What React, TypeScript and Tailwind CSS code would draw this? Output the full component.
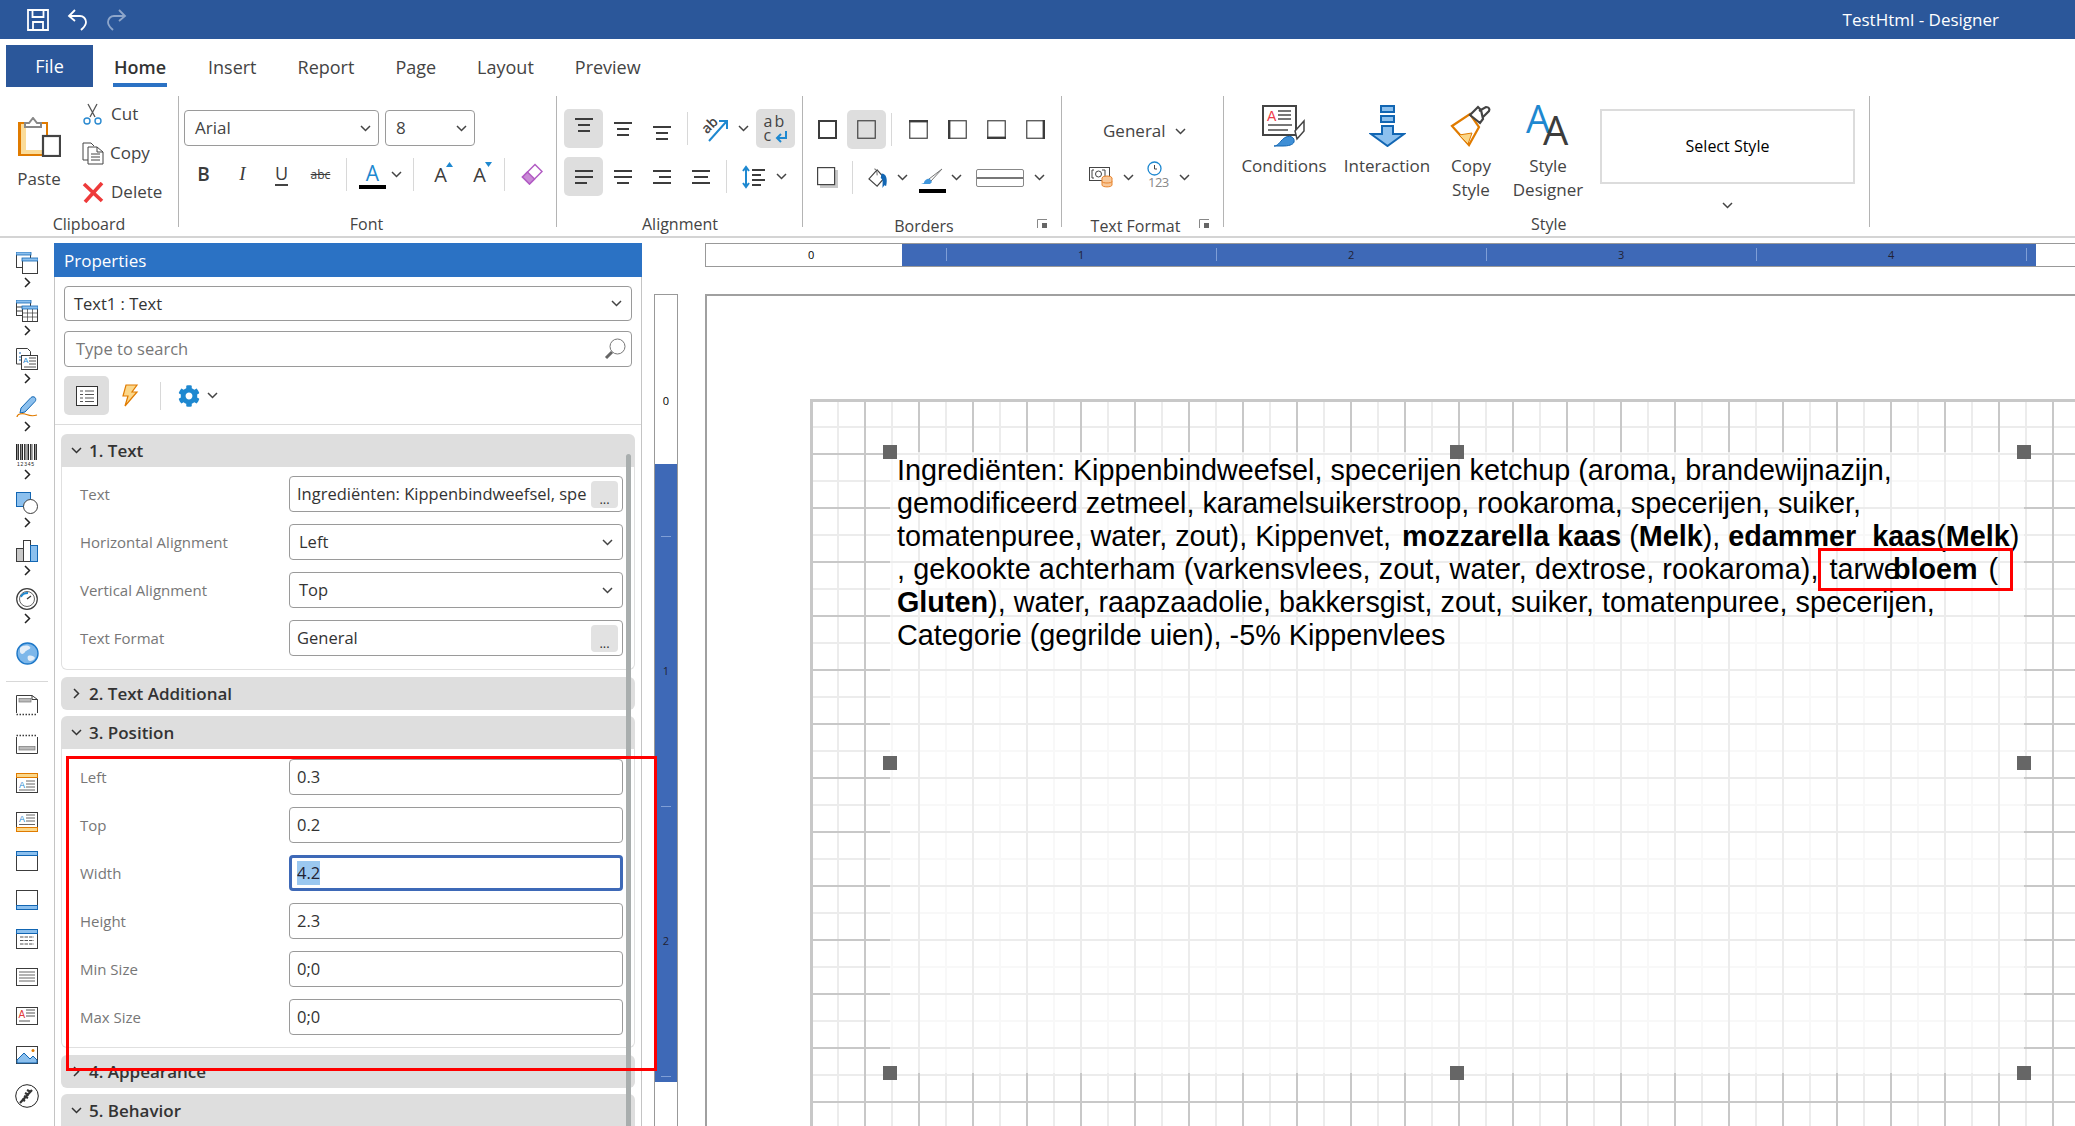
import React from "react";
import { FaCog } from "react-icons/fa";

const Chev = ({ dir = "down", c = "#444", w = 11, h = 7, className = "" }: { dir?: string; c?: string; w?: number; h?: number; className?: string }) =>
  dir === "down" ? (
    <svg width={w} height={h} viewBox="0 0 11 7" className={className}><path d="M1 1l4.500 4.500L10 1" fill="none" stroke={c} strokeWidth="1.500" /></svg>
  ) : (
    <svg width={h} height={w} viewBox="0 0 7 11" className={className}><path d="M1 1l4.500 4.500L1 10" fill="none" stroke={c} strokeWidth="1.500" /></svg>
  );

const Sep = ({ h = "h-[33px]", ml = "" }: { h?: string; ml?: string }) => <div className={`w-px shrink-0 bg-[#d8d8d8] ${h} ${ml}`} />;
const GroupSep = () => <div className="w-px h-[131px] shrink-0 bg-[#b4b4b4]" />;

const Align = ({ y = 0, mode = "center" }: { y?: number; mode?: string }) => {
  const rows = mode === "left" ? [[0, 18], [0, 18], [0, 12]] : mode === "right" ? [[0, 18], [6, 12], [0, 18]] : mode === "just" ? [[0, 18], [2, 14], [0, 18]] : mode === "top" ? [[0, 18], [3, 12], [3, 12]] : [[0, 18], [0, 18], [3, 12]];
  return (
    <svg width="18" height="22" viewBox="0 0 18 22" style={{ transform: `translateY(${y}px)` }}>
      {rows.map((r, i) => <rect key={i} x={r[0]} y={4 + i * 6} width={r[1]} height="2" fill="#3c3c3c" />)}
    </svg>
  );
};

const BorderBox = ({ sides = "all" }: { sides?: string }) => (
  <svg width="19" height="19" viewBox="0 0 19 19">
    <rect x="0.750" y="0.750" width="17.500" height="17.500" fill="none" stroke="#444" strokeWidth="1.200" />
    {sides === "all" && <rect x="1" y="1" width="17" height="17" fill="none" stroke="#3c3c3c" strokeWidth="2" />}
    {sides === "top" && <rect x="0" y="0" width="19" height="2.400" fill="#3c3c3c" />}
    {sides === "left" && <rect x="0" y="0" width="2.400" height="19" fill="#3c3c3c" />}
    {sides === "bottom" && <rect x="0" y="16.600" width="19" height="2.400" fill="#3c3c3c" />}
    {sides === "right" && <rect x="16.600" y="0" width="2.400" height="19" fill="#3c3c3c" />}
  </svg>
);

const Launcher = ({ className = "" }: { className?: string }) => (
  <svg width="11" height="10" viewBox="0 0 11 10" className={className}><path d="M0.500 9V0.500H10" fill="none" stroke="#888" /><rect x="5" y="4" width="5" height="5" fill="#666" /></svg>
);

const Cell = ({ w = "w-[39px]", ml = "", active = false, h = "h-[39px]", children }: { w?: string; ml?: string; active?: boolean; h?: string; children?: React.ReactNode }) => (
  <div className={`flex shrink-0 items-center justify-center rounded-[5px] ${w} ${h} ${ml} ${active ? "bg-[#dedede]" : ""}`}>{children}</div>
);

const Label = ({ children, className = "" }: { children: React.ReactNode; className?: string }) => (
  <div className={`relative h-[24px] text-center text-[16px] leading-[24px] text-[#444] ${className}`}>{children}</div>
);

const Combo = ({ w, text }: { w: string; text: string }) => (
  <div className={`flex h-[36px] items-center justify-between rounded-[4px] border border-[#9a9a9a] pl-[10px] pr-[7px] text-[17px] text-[#444] ${w}`}>
    <span>{text}</span>
    <Chev />
  </div>
);

const Pill = ({ w = "w-[14px]", ml = "" }: { w?: string; ml?: string }) => (
  <div className={`flex shrink-0 items-center justify-center ${w} ${ml}`}><Chev /></div>
);

const Big = ({ icon, l1, l2, w, ml = "" }: { icon: React.ReactNode; l1: string; l2?: string; w: string; ml?: string }) => (
  <div className={`flex shrink-0 flex-col items-center pt-[2px] ${w} ${ml}`}>
    <div className="flex h-[48px] items-center justify-center">{icon}</div>
    <div className="mt-[4px] text-center text-[17px] leading-[24px] text-[#444]">{l1}{l2 && <br />}{l2}</div>
  </div>
);

const Ribbon = () => (
  <div className="flex h-[149px] items-start pt-[9px]">
    {/* Clipboard */}
    <div className="flex h-[140px] w-[178px] shrink-0 flex-col">
      <div className="flex flex-1">
        <div className="ml-[14px] flex w-[50px] flex-col items-center pt-[21px]">
          <svg width="43" height="40" viewBox="0 0 43 40">
            <rect x="1" y="6" width="28" height="32" fill="#fff" stroke="#e07b00" strokeWidth="2" />
            <path d="M2 7h6v26h20v4H2z" fill="#fbdc9a" />
            <path d="M2 6h1v31H2z" fill="#e07b00" />
            <path d="M7 10V6h4l4-5 4 5h4v4z" fill="#fff" stroke="#888" strokeWidth="2" />
            <rect x="25" y="19" width="17" height="20" fill="#fff" stroke="#444" strokeWidth="2.200" />
          </svg>
          <div className="mt-[10px] text-[17px] leading-[24px] text-[#444]">Paste</div>
        </div>
        <div className="ml-[18px] flex flex-col gap-[3px]">
          <div className="flex h-[36px] items-center gap-[8px] text-[17px] text-[#444]">
            <svg width="21" height="22" viewBox="0 0 21 22"><path d="M6 1l7 13M15 1L8 14" stroke="#555" strokeWidth="1.300" fill="none" /><circle cx="5" cy="18" r="3" fill="none" stroke="#2b8ad0" strokeWidth="1.400" /><circle cx="16" cy="18" r="3" fill="none" stroke="#2b8ad0" strokeWidth="1.400" /></svg>
            Cut
          </div>
          <div className="flex h-[36px] items-center gap-[6px] text-[17px] text-[#444]">
            <svg width="22" height="23" viewBox="0 0 22 23"><path d="M6 18H1V1h8l3 3" fill="#fff" stroke="#444" /><path d="M6 5h9l6 5v12H6z" fill="#fff" stroke="#444" /><path d="M15 5v5h6M9 12h9M9 15h9M9 18h9" fill="none" stroke="#444" /></svg>
            Copy
          </div>
          <div className="flex h-[36px] items-center gap-[7px] text-[17px] text-[#444]">
            <svg width="22" height="21" viewBox="0 0 22 21"><path d="M2 2l18 17M20 1L3 20" stroke="#ee3a3a" strokeWidth="3.600" fill="none" /></svg>
            Delete
          </div>
        </div>
      </div>
      <Label>Clipboard</Label>
    </div>
    <GroupSep />
    {/* Font */}
    <div className="flex h-[140px] w-[377px] shrink-0 flex-col pl-[5px]">
      <div className="flex flex-1 flex-col pt-[14px]">
        <div className="flex gap-[6px]">
          <Combo w="w-[195px]" text="Arial" />
          <Combo w="w-[90px]" text="8" />
        </div>
        <div className="mt-[9px] flex h-[39px] items-center text-[#3c3c3c]">
          <Cell><span className="text-[19px] font-semibold">B</span></Cell>
          <Cell><span className="font-['Liberation_Serif',serif] text-[19px] italic">I</span></Cell>
          <Cell><span className="border-b-2 border-[#444] text-[18px] leading-[21px]">U</span></Cell>
          <Cell><span className="text-[12px] line-through">abc</span></Cell>
          <Sep ml="ml-[6px]" />
          <div className="ml-[12px] flex w-[27px] shrink-0 flex-col items-center pt-[1px]">
            <span className="text-[21px] leading-[24px] text-[#1e88d0]">A</span>
            <span className="h-[4px] w-[27px] bg-black" />
          </div>
          <Pill ml="ml-[3px]" />
          <Sep ml="ml-[10px]" />
          <Cell ml="ml-[7px]"><span className="relative text-[20px]">A<svg className="absolute -right-[6px] top-[2px]" width="7" height="5" viewBox="0 0 7 5"><path d="M3.500 0L7 5H0z" fill="#1e88d0" /></svg></span></Cell>
          <Cell><span className="relative text-[20px]">A<svg className="absolute -right-[6px] top-[2px]" width="7" height="5" viewBox="0 0 7 5"><path d="M0 0h7L3.500 5z" fill="#1e88d0" /></svg></span></Cell>
          <Sep ml="ml-[5px]" />
          <Cell ml="ml-[7px]">
            <svg width="22" height="23" viewBox="0 0 22 23"><path d="M1.500 14L14 1.500l7 7L8.500 21z" fill="#fff" stroke="#b25cc4" strokeWidth="1.500" /><path d="M1.500 14l5-5 7 7-5 5z" fill="#c98ad6" stroke="#b25cc4" strokeWidth="1.500" /></svg>
          </Cell>
        </div>
      </div>
      <Label className="pr-[7px]">Font</Label>
    </div>
    <GroupSep />
    {/* Alignment */}
    <div className="flex h-[140px] w-[245px] shrink-0 flex-col pl-[7px]">
      <div className="flex flex-1 flex-col pt-[13px]">
        <div className="flex items-center">
          <Cell active><Align y={-4} mode="top" /></Cell>
          <Cell><Align y={0} mode="top" /></Cell>
          <Cell><Align y={4} mode="top" /></Cell>
          <Sep ml="ml-[6px]" />
          <Cell ml="ml-[8px]">
            <span className="relative block h-[30px] w-[30px]">
              <span className="absolute left-[0px] top-[3px] -rotate-45 text-[14px] font-semibold leading-[16px] text-[#444]">ab</span>
              <svg className="absolute inset-0" width="30" height="30" viewBox="0 0 30 30"><path d="M8 27L25 8M18 7h8v8" fill="none" stroke="#1e88d0" strokeWidth="2" /></svg>
            </span>
          </Cell>
          <Pill ml="ml-[1px]" />
          <Cell active ml="ml-[6px]">
            <span className="relative block h-[30px] w-[24px] text-[16px] leading-[14px] text-[#444]">
              <span className="tracking-[2px]">ab</span><br />c
              <svg className="absolute bottom-[1px] right-[0px]" width="14" height="12" viewBox="0 0 14 12"><path d="M12 0v7H3M7 3L3 7l4 4" fill="none" stroke="#1e88d0" strokeWidth="2" /></svg>
            </span>
          </Cell>
        </div>
        <div className="mt-[9px] flex items-center">
          <Cell active><Align mode="left" /></Cell>
          <Cell><Align mode="center" /></Cell>
          <Cell><Align mode="right" /></Cell>
          <Cell><Align mode="just" /></Cell>
          <Sep ml="ml-[6px]" />
          <Cell ml="ml-[7px]">
            <svg width="24" height="24" viewBox="0 0 24 24"><path d="M4 3v18M1 6l3-4 3 4M1 18l3 4 3-4" fill="none" stroke="#1e88d0" strokeWidth="2" /><path d="M10 5h13M10 10h9M10 15h13M10 20h9" stroke="#3c3c3c" strokeWidth="2" /></svg>
          </Cell>
          <Pill ml="ml-[1px]" />
        </div>
      </div>
      <Label className="pr-[6px]">Alignment</Label>
    </div>
    <GroupSep />
    {/* Borders */}
    <div className="flex h-[140px] w-[258px] shrink-0 flex-col pl-[5px]">
      <div className="flex flex-1 flex-col pt-[14px]">
        <div className="flex items-center">
          <Cell><BorderBox sides="all" /></Cell>
          <Cell active><BorderBox sides="none" /></Cell>
          <Sep ml="ml-[5px]" />
          <Cell ml="ml-[7px]"><BorderBox sides="top" /></Cell>
          <Cell><BorderBox sides="left" /></Cell>
          <Cell><BorderBox sides="bottom" /></Cell>
          <Cell><BorderBox sides="right" /></Cell>
        </div>
        <div className="mt-[9px] flex items-center">
          <Cell>
            <svg width="21" height="21" viewBox="0 0 21 21"><rect x="3" y="3" width="18" height="18" fill="#c8c8c8" /><rect x="0.600" y="0.600" width="17" height="17" fill="#fff" stroke="#444" strokeWidth="1.200" /></svg>
          </Cell>
          <Sep ml="ml-[5px]" />
          <Cell w="w-[28px]" ml="ml-[11px]">
            <svg width="18" height="18" viewBox="0 0 24 24" className="scale-[1.2]"><path d="M2 13L11 3l8 9-8 9z" fill="#fff" stroke="#444" strokeWidth="1.300" /><path d="M8 2c3 0 3 5 3 7" fill="none" stroke="#444" /><path d="M16 7c5 0 7 6 5 14l-2-1-2 3c0-6 1-9-2-11z" fill="#1266b3" /></svg>
          </Cell>
          <Pill ml="ml-[3px]" />
          <div className="ml-[9px] flex h-[30px] w-[28px] shrink-0 flex-col items-center justify-end">
            <svg width="24" height="21" viewBox="0 0 24 21"><path d="M22 1l-11 12-2-2z" fill="#fff" stroke="#777" /><path d="M10 11c-3-1-6 2-6 4l-3 1h9l2-2z" fill="#3f96dc" /></svg>
            <div className="h-[4px] w-[27px] bg-black" />
          </div>
          <Pill ml="ml-[3px]" />
          <div className="ml-[13px] flex h-[18px] w-[48px] shrink-0 items-center rounded-[2px] border border-[#888]"><div className="h-[2px] w-full bg-[#777]" /></div>
          <Pill ml="ml-[8px]" />
        </div>
      </div>
      <Label className="pr-[21px] pt-[2px]">Borders<Launcher className="absolute right-[13px] top-[7px]" /></Label>
    </div>
    <GroupSep />
    {/* Text Format */}
    <div className="flex h-[140px] w-[161px] shrink-0 flex-col">
      <div className="flex flex-1 flex-col">
        <div className="flex h-[24px] mt-[23px] items-center pl-[41px] text-[17px] text-[#444]">General<Chev className="ml-[9px]" /></div>
        <div className="mt-[21px] flex items-center pl-[27px]">
          <svg width="25" height="21" viewBox="0 0 25 21"><rect x="0.500" y="0.500" width="20" height="13" fill="#fff" stroke="#444" /><path d="M5 3H3v8h2M13 3h3v8h-3" fill="none" stroke="#444" /><circle cx="9.500" cy="7" r="3" fill="none" stroke="#444" /><ellipse cx="18" cy="11" rx="5" ry="2" fill="#f8c89a" stroke="#e8832a" /><path d="M13 11v7c0 2.500 10 2.500 10 0v-7" fill="#f8c89a" stroke="#e8832a" /><path d="M13 14.500c0 2 10 2 10 0" fill="none" stroke="#e8832a" /></svg>
          <Chev className="ml-[9px]" />
          <div className="relative ml-[12px] h-[26px] w-[24px] text-[15px] leading-[15px] text-[#888]">
            <svg width="15" height="15" viewBox="0 0 15 15" className="absolute left-[1px] top-[-3px]"><circle cx="7.500" cy="7.500" r="6.500" fill="#fff" stroke="#1e88d0" strokeWidth="1.300" /><path d="M7.500 4v4H10" fill="none" stroke="#444" /></svg>
            <span className="absolute left-[2px] top-[11px] text-[13px] tracking-[-0.5px]">123</span>
          </div>
          <Chev className="ml-[9px]" />
        </div>
      </div>
      <Label className="pr-[14px] pt-[2px]">Text Format<Launcher className="absolute right-[13px] top-[7px]" /></Label>
    </div>
    <GroupSep />
    {/* Style */}
    <div className="flex h-[140px] w-[645px] shrink-0 flex-col">
      <div className="flex flex-1 pt-[4px]">
        <Big w="w-[90px]" ml="ml-[15px]" l1="Conditions" icon={
          <svg width="44" height="42" viewBox="0 0 44 42"><rect x="1" y="1" width="33" height="29" fill="#fff" stroke="#444" strokeWidth="2" /><text x="5" y="16" fontSize="14" fill="#ee3a4a" fontFamily="Liberation Sans">A</text><path d="M16 6h13M16 10h13M16 14h13M6 20h24M6 25h20" stroke="#777" strokeWidth="2" /><path d="M33 26l9-10v10l-7 8z" fill="#fff" stroke="#444" strokeWidth="1.500" /><path d="M12 41c5 0 6-6 12-9 5-2 9 1 8 5-1 3-6 4-11 4z" fill="#3f8fd6" stroke="#1266b3" /></svg>
        } />
        <Big w="w-[86px]" ml="ml-[15px]" l1="Interaction" icon={
          <svg width="37" height="42" viewBox="0 0 37 42"><rect x="12" y="1" width="13" height="6" fill="#8cc0ee" stroke="#1266b3" strokeWidth="2" /><rect x="12" y="11" width="13" height="6" fill="#8cc0ee" stroke="#1266b3" strokeWidth="2" /><path d="M13 21h11v8h11L18.500 41 2 29h11z" fill="#8cc0ee" stroke="#1266b3" strokeWidth="2" /></svg>
        } />
        <Big w="w-[70px]" ml="ml-[6px]" l1="Copy" l2="Style" icon={
          <svg width="42" height="42" viewBox="0 0 42 42"><path d="M2 21L20 9l9 13-10 18z" fill="#fff" stroke="#e07b00" strokeWidth="2.200" /><path d="M9 30l13 -2-4 11z" fill="#fbd78a" stroke="#e07b00" /><path d="M20 10l8-8 3 3 2 9-3 4zM29 6l7-4c3 0 4 2 3 4l-6 6" fill="#fff" stroke="#444" strokeWidth="2.200" /></svg>
        } />
        <Big w="w-[76px]" ml="ml-[4px]" l1="Style" l2="Designer" icon={
          <span className="relative block h-[46px] w-[40px] leading-none">
            <span className="absolute left-[-2px] top-[-5px] text-[38px] leading-[40px] text-[#1e88d0]">A</span>
            <span className="absolute left-[15px] top-[6px] text-[40px] leading-[42px] text-[#3c3c3c]">A</span>
          </span>
        } />
        <div className="ml-[14px] flex flex-col items-center pt-[9px]">
          <div className="flex h-[75px] w-[255px] items-center justify-center border-2 border-[#dcdcdc] pb-[2px] text-[16px] text-black">Select Style</div>
          <Chev className="mt-[18px]" />
        </div>
      </div>
      <Label className="pl-[307px] text-left">Style</Label>
    </div>
    <GroupSep />
  </div>
);

const W = (p: { children: React.ReactNode }) => <svg width="22" height="22" viewBox="0 0 22 22">{p.children}</svg>;
const S = "#3c3c3c";
const B = "#8cc0ee";
const D = "#1266b3";

const topIcons: React.ReactNode[] = [
  <W><rect x="0.500" y="0.500" width="14" height="15" fill="#fff" stroke={S} /><rect x="0" y="0" width="15" height="3" fill={B} stroke={D} strokeWidth="0.800" /><rect x="6.500" y="6.500" width="15" height="15" fill="#fff" stroke={S} /><rect x="6" y="6" width="16" height="3" fill={B} stroke={D} strokeWidth="0.800" /></W>,
  <W><rect x="0.500" y="0.500" width="14" height="15" fill="#fff" stroke={S} /><rect x="0" y="0" width="15" height="3" fill={B} stroke={D} strokeWidth="0.800" /><path d="M1 7h6M1 11h6" stroke={S} /><rect x="6.500" y="6.500" width="15" height="15" fill="#fff" stroke={S} /><rect x="6" y="6" width="16" height="3" fill={B} stroke={D} strokeWidth="0.800" /><path d="M11.500 9v12M16.500 9v12M7 13h14M7 17h14" stroke={S} strokeWidth="0.700" /></W>,
  <W><path d="M10 16H0.500V0.500h11l3 3V7" fill="#fff" stroke={S} /><path d="M3 5h2M3 9h6M3 12h6" stroke={D} /><rect x="5.500" y="7.500" width="16" height="14" fill="#fff" stroke={S} /><text x="7" y="15" fontSize="8" fill="#1e88d0" fontFamily="Liberation Sans">A</text><path d="M13 10h7M13 13h7M13 16h7M8 19h12" stroke={S} strokeWidth="0.900" /></W>,
  <W><path d="M5 12L15 1.500c1-1 3-1 4 0s1 3 0 4L9 16l-5 1z" fill={B} stroke={D} /><path d="M1 21c0-3 5-4 8-3s6 3 12 1" fill="none" stroke="#e07b00" strokeWidth="1.200" /></W>,
  <W>{[0, 2, 4, 5.500, 8, 9.500, 11.500, 14, 15.500, 18, 20].map((x, i) => <rect key={i} x={x} y="0" width={i % 3 === 0 ? 1.500 : 0.900} height="16" fill="#222" />)}<text x="1" y="21.500" fontSize="5" fill="#222" fontFamily="Liberation Sans" letterSpacing="0.800">12345</text></W>,
  <W><rect x="0.500" y="0.500" width="14" height="14" fill={B} stroke={D} /><circle cx="14.500" cy="14.500" r="7" fill="#fff" stroke={S} strokeWidth="1" /></W>,
  <W><rect x="0.500" y="8.500" width="7" height="13" fill="#c8c8c8" stroke={S} /><rect x="7.500" y="0.500" width="7" height="21" fill="#fff" stroke={S} /><rect x="14.500" y="5.500" width="7" height="16" fill={B} stroke={D} /></W>,
  <W><circle cx="11" cy="11" r="10.300" fill="#fff" stroke={S} strokeWidth="1.200" /><circle cx="11" cy="11" r="7.500" fill="none" stroke={S} strokeWidth="0.800" /><path d="M5 9c1-3 4-4 7-4" fill="none" stroke="#1e88d0" strokeWidth="1.800" /><path d="M11 11l4-3" stroke={S} strokeWidth="1.300" /></W>,
];

const band = (a: React.ReactNode) => <W>{a}</W>;
const bottomIcons: React.ReactNode[] = [
  band(<><path d="M0.500 18V0.500H16l5.500 4V18" fill="#fff" stroke={S} /><path d="M0.500 19.500h21" stroke={S} strokeDasharray="1.500 1.500" strokeWidth="1.500" /><rect x="3" y="3.500" width="12" height="3.500" fill="#bbb" stroke="#777" strokeWidth="0.700" /><path d="M16 0.500v4h5.500" fill="none" stroke={S} /></>),
  band(<><path d="M0.500 3V19.500h21V3" fill="#fff" stroke={S} /><path d="M0.500 1.500h21" stroke={S} strokeDasharray="1.500 1.500" strokeWidth="1.500" /><rect x="3" y="12.500" width="16" height="3.500" fill="#bbb" stroke="#777" strokeWidth="0.700" /></>),
  band(<><rect x="0.500" y="0.500" width="21" height="19" fill="#fff" stroke={S} /><rect x="0.500" y="0.500" width="21" height="4" fill="#fbd78a" stroke="#e07b00" /><text x="3" y="15" fontSize="9" fill="#1e88d0" fontFamily="Liberation Sans">A</text><path d="M10 8h9M10 11h9M10 14h9M3 17h16" stroke="#555" strokeWidth="0.900" /></>),
  band(<><rect x="0.500" y="0.500" width="21" height="19" fill="#fff" stroke={S} /><rect x="0.500" y="15.500" width="21" height="4" fill="#fbd78a" stroke="#e07b00" /><text x="3" y="10" fontSize="9" fill="#1e88d0" fontFamily="Liberation Sans">A</text><path d="M10 3h9M10 6h9M10 9h9M3 12.500h16" stroke="#555" strokeWidth="0.900" /></>),
  band(<><rect x="0.500" y="0.500" width="21" height="19" fill="#fff" stroke={S} /><rect x="0.500" y="0.500" width="21" height="4" fill={B} stroke={D} /></>),
  band(<><rect x="0.500" y="0.500" width="21" height="19" fill="#fff" stroke={S} /><rect x="0.500" y="15.500" width="21" height="4" fill={B} stroke={D} /></>),
  band(<><rect x="0.500" y="0.500" width="21" height="19" fill="#fff" stroke={S} /><rect x="0.500" y="0.500" width="21" height="4" fill={B} stroke={D} /><path d="M4 8h14M4 11.500h14M4 15h14" stroke="#555" strokeDasharray="3.500 1" /></>),
  band(<><rect x="0.500" y="0.500" width="21" height="17" fill="#fff" stroke={S} /><path d="M3 4h16M3 7h16M3 10h16M3 13h16" stroke="#666" /></>),
  band(<><rect x="0.500" y="0.500" width="21" height="17" fill="#fff" stroke={S} /><text x="2.500" y="11" fontSize="10" fill="#e03a3a" fontFamily="Liberation Sans">A</text><path d="M10 3h9M10 6h9M10 9h9M3 14h11" stroke="#555" /></>),
  band(<><rect x="0.500" y="0.500" width="21" height="17" fill="#fff" stroke={S} /><path d="M1 17v-3l7-7 6 6 3-3 4 4v3z" fill={B} stroke={D} /><circle cx="17" cy="4.500" r="1.500" fill="#e07b00" /></>),
  <svg width="24" height="24" viewBox="0 0 24 24"><circle cx="12" cy="12" r="11.300" fill="#fff" stroke="#222" /><path d="M5 19L17 6M10 9l4 2M9 12l4 2M12 6l4 2M7 15l3 2" stroke="#333" strokeWidth="2.200" /></svg>,
];

const LeftBar = () => (
  <div className="flex w-[54px] shrink-0 flex-col items-center pt-[14px]">
    {topIcons.map((ic, i) => (
      <div key={i} className="flex h-[48px] w-full flex-col items-center">
        {ic}
        <Chev dir="right" c="#222" w={11} h={7} className="mt-[3px]" />
      </div>
    ))}
    <svg width="23" height="23" viewBox="0 0 23 23" className="mt-[6px]"><circle cx="11.500" cy="11.500" r="10.500" fill="#7db7ea" stroke="#1e78c8" strokeWidth="1.400" /><path d="M4 6c3-3 8-3 10-1s-4 3-5 5-4 3-5 0zM12 14c3-1 6 0 7 2-1 2-3 3-5 3s-3-3-2-5z" fill="#e4eef8" /></svg>
    <div className="mt-[16px] h-px w-[42px] bg-[#d8d8d8]" />
    <div className="mt-[4px] flex flex-col items-center">
      {bottomIcons.map((ic, i) => <div key={i} className="flex h-[39px] items-center justify-center">{ic}</div>)}
    </div>
  </div>
);

const Header = ({ title, open = true, cls = "" }: { title: string; open?: boolean; cls?: string }) => (
  <div className={`flex h-[33px] shrink-0 items-center bg-[#dedede] ${open ? "rounded-t-[6px]" : "rounded-[6px]"} ${cls}`}>
    <div className="flex w-[28px] justify-center pl-[2px]"><Chev dir={open ? "down" : "right"} c="#333" /></div>
    <span className="text-[17px] font-semibold text-[#333]">{title}</span>
  </div>
);

const Row = ({ label, children }: { label: string; children: React.ReactNode }) => (
  <div className="flex h-[36px] items-center pl-[18px]">
    <div className="w-[209px] shrink-0 pt-[1px] text-[15px] text-[#777]">{label}</div>
    {children}
  </div>
);

const Field = ({ value, dots, chev, focus }: { value: React.ReactNode; dots?: boolean; chev?: boolean; focus?: boolean }) => (
  <div className={`flex h-[36px] w-[334px] shrink-0 items-center rounded-[4px] bg-white text-[16.500px] text-[#333] ${focus ? "border-[3px] border-[#3e69b7] pl-[5px]" : "border border-[#9a9a9a] pl-[7px]"} ${chev ? "pr-[9px]" : "pr-[4px]"}`}>
    <div className="min-w-0 flex-1 overflow-hidden whitespace-nowrap">{value}</div>
    {dots && <div className="ml-[4px] flex h-[27px] w-[27px] shrink-0 items-end justify-center rounded-[4px] bg-[#e2e2e2] pb-[2px] text-[13px] leading-[13px]">...</div>}
    {chev && <Chev />}
  </div>
);

const Properties = () => (
  <div className="relative mt-[5px] flex h-[883px] w-[588px] shrink-0 flex-col overflow-hidden">
    <div className="flex h-[34px] shrink-0 items-center bg-[#2b72c4] pl-[10px] pt-[1px] text-[17px] text-white">Properties</div>
    <div className="flex flex-1 flex-col border-x border-[#c4c4c4]">
      <div className="flex flex-col px-[9px] pt-[9px]">
        <div className="flex h-[35px] items-center justify-between rounded-[4px] border border-[#9a9a9a] pl-[9px] pr-[9px] text-[16.500px] text-[#333]"><span className="pt-[2px]">Text1 : Text</span><Chev /></div>
        <div className="mt-[10px] flex h-[36px] items-center justify-between rounded-[4px] border border-[#9a9a9a] pl-[11px] pr-[5px] text-[16.500px] text-[#777]">
          <span className="pt-[1px]">Type to search</span>
          <svg width="22" height="22" viewBox="0 0 22 22"><circle cx="13.500" cy="8.500" r="7.500" fill="#fff" stroke="#777" /><path d="M8 14l-6 6" stroke="#666" strokeWidth="3" /></svg>
        </div>
        <div className="mt-[9px] flex h-[39px] items-center">
          <div className="flex h-[39px] w-[45px] items-center justify-center rounded-[5px] bg-[#dedede]">
            <svg width="22" height="20" viewBox="0 0 22 20"><rect x="0.500" y="0.500" width="21" height="19" fill="#fff" stroke="#333" /><path d="M4 5h3M4 8.500h3M4 12h3M4 15.500h3M9 5h9M9 8.500h9M9 12h9M9 15.500h9" stroke="#555" /></svg>
          </div>
          <svg width="18" height="23" viewBox="0 0 18 23" className="ml-[12px]"><path d="M5 1h11l-5 7h5L4 22l3-10H2z" fill="#fbd78a" stroke="#e07b00" strokeWidth="1.200" /></svg>
          <div className="ml-[21px] h-[28px] w-px bg-[#d8d8d8]" />
          <FaCog className="ml-[17px] text-[#1e88d0]" size={22} />
          <Chev className="ml-[7px]" />
        </div>
      </div>
      <div className="mt-[9px] h-px bg-[#dcdcdc]" />
      <div className="flex flex-col px-[6px] pt-[9px]">
        <Header title="1. Text" />
        <div className="flex flex-col gap-[12px] rounded-b-[6px] border border-t-0 border-[#e0e0e0] pb-[13px] pt-[9px]">
          <Row label="Text"><Field value="Ingrediënten: Kippenbindweefsel, specerijen ketchup" dots /></Row>
          <Row label="Horizontal Alignment"><Field value={<span className="pl-[2px]">Left</span>} chev /></Row>
          <Row label="Vertical Alignment"><Field value={<span className="pl-[2px]">Top</span>} chev /></Row>
          <Row label="Text Format"><Field value="General" dots /></Row>
        </div>
        <Header title="2. Text Additional" open={false} cls="mt-[7px]" />
        <Header title="3. Position" cls="mt-[6px]" />
        <div className="flex flex-col gap-[12px] rounded-b-[6px] border border-t-0 border-[#e0e0e0] pb-[12px] pt-[10px]">
          <Row label="Left"><Field value="0.3" /></Row>
          <Row label="Top"><Field value="0.2" /></Row>
          <Row label="Width"><Field focus value={<span className="bg-[#9bc8f0] py-[2px] text-[#223]">4.2</span>} /></Row>
          <Row label="Height"><Field value="2.3" /></Row>
          <Row label="Min Size"><Field value="0;0" /></Row>
          <Row label="Max Size"><Field value="0;0" /></Row>
        </div>
        <Header title="4. Appearance" open={false} cls="mt-[7px]" />
        <Header title="5. Behavior" cls="mt-[6px]" />
      </div>
    </div>
    <div className="absolute left-[572px] top-[211px] h-[700px] w-[5px] rounded-full bg-[#a9aeae]" />
  </div>
);

const HRuler = () => (
  <div className="relative ml-[51px] flex h-[24px] border-y border-[#999]">
    <div className="w-[197px] shrink-0 border-l border-[#999] bg-white" />
    <div className="w-[1134px] shrink-0 bg-[#3e69b7]" />
    <span className="absolute left-[103px] top-[2px] text-[11px] leading-[18px] text-black">0</span>
    <span className="absolute left-[373px] top-[2px] text-[11px] leading-[18px] text-[#223]">1</span>
    <span className="absolute left-[643px] top-[2px] text-[11px] leading-[18px] text-[#223]">2</span>
    <span className="absolute left-[913px] top-[2px] text-[11px] leading-[18px] text-[#223]">3</span>
    <span className="absolute left-[1183px] top-[2px] text-[11px] leading-[18px] text-[#223]">4</span>
    <i className="absolute left-[241px] top-[4px] h-[13px] w-px bg-[#7f9ed6]" />
    <i className="absolute left-[511px] top-[4px] h-[13px] w-px bg-[#7f9ed6]" />
    <i className="absolute left-[781px] top-[4px] h-[13px] w-px bg-[#7f9ed6]" />
    <i className="absolute left-[1051px] top-[4px] h-[13px] w-px bg-[#7f9ed6]" />
    <i className="absolute left-[1321px] top-[4px] h-[13px] w-px bg-[#7f9ed6]" />
  </div>
);

const VRuler = () => (
  <div className="relative flex h-[832px] w-[24px] shrink-0 flex-col border-x border-t border-[#999]">
    <div className="h-[169px] shrink-0 bg-white" />
    <div className="h-[618px] shrink-0 bg-[#3e69b7]" />
    <span className="absolute left-0 top-[97px] w-full text-center text-[11px] leading-[18px] text-black">0</span>
    <span className="absolute left-0 top-[367px] w-full text-center text-[11px] leading-[18px] text-[#223]">1</span>
    <span className="absolute left-0 top-[637px] w-full text-center text-[11px] leading-[18px] text-[#223]">2</span>
    <i className="absolute left-[6px] top-[241px] h-px w-[10px] bg-[#7f9ed6]" />
    <i className="absolute left-[6px] top-[511px] h-px w-[10px] bg-[#7f9ed6]" />
    <i className="absolute left-[6px] top-[781px] h-px w-[10px] bg-[#7f9ed6]" />
  </div>
);

const Handle = ({ cls }: { cls: string }) => <div className={`absolute h-[14px] w-[14px] bg-[#666] ${cls}`} />;

const Canvas = () => (
  <div className="ml-[27px] flex h-[832px] flex-1 border-l-2 border-t-2 border-[#a0a0a0] pl-[103px] pt-[103px]">
    <div className="relative h-[900px] flex-1 border-l-[3px] border-t-[3px] border-[#c8c8c8] bg-origin-border [background-image:linear-gradient(to_right,#c8c8c8_2px,transparent_2px),linear-gradient(to_bottom,#c8c8c8_2px,transparent_2px),linear-gradient(to_right,#ececec_2px,transparent_2px),linear-gradient(to_bottom,#ececec_2px,transparent_2px)] [background-position:0_0,0_0,27px_0,0_27px] [background-size:54px_54px,54px_54px,54px_54px,54px_54px]">
      <div className="absolute left-[77px] top-[50px] h-[621px] w-[1134px] bg-white/65 pl-[7px] pt-[2px] font-['Liberation_Sans',Arial,sans-serif] text-[28.770px] leading-[33px] text-black whitespace-nowrap">
        Ingrediënten: Kippenbindweefsel, specerijen ketchup (aroma, brandewijnazijn,<br />
        gemodificeerd zetmeel, karamelsuikerstroop, rookaroma, specerijen, suiker,<br />
        tomatenpuree, water, zout), Kippenvet, <span className="font-bold ml-[3px]">mozzarella kaas</span> (<b>Melk</b>), <b>edammer <span className="ml-[8px]">kaas</span></b>(<b>Melk</b>)<br />
        <span className="tracking-[0.1px]">, gekookte achterham (varkensvlees, zout, water, dextrose, rookaroma),</span> <span className="ml-[3px]">tarwe</span><b className="-ml-[7px]">bloem</b> <span className="ml-[3px]">(</span><br />
        <b>Gluten</b>), water, raapzaadolie, bakkersgist, zout, suiker, tomatenpuree, specerijen,<br />
        Categorie (gegrilde uien), -5% Kippenvlees
      </div>
      <Handle cls="left-[70px] top-[43px]" />
      <Handle cls="left-[637px] top-[43px]" />
      <Handle cls="left-[1204px] top-[43px]" />
      <Handle cls="left-[70px] top-[354px]" />
      <Handle cls="left-[1204px] top-[354px]" />
      <Handle cls="left-[70px] top-[664px]" />
      <Handle cls="left-[637px] top-[664px]" />
      <Handle cls="left-[1204px] top-[664px]" />
    </div>
  </div>
);

export default function App() {
  return (
    <div className="relative h-[1126px] w-[2075px] overflow-hidden bg-white font-['Open_Sans',sans-serif]">
      <div className="flex h-[39px] items-center justify-between bg-[#2b579a] pl-[27px] pr-[76px]">
        <div className="flex items-center">
          <svg width="22" height="22" viewBox="0 0 22 22"><path d="M1 1h20v20H1zM5.500 1v7h11V1M6 21v-8h10v8" fill="none" stroke="#fff" strokeWidth="1.800" /></svg>
          <svg width="21" height="22" viewBox="0 0 21 22" className="ml-[18px]"><path d="M8 1L2 7l6 5M2 7h11a6 6 0 0 1 6 6c0 4-3 6-5 8" fill="none" stroke="#fff" strokeWidth="1.800" /></svg>
          <svg width="21" height="22" viewBox="0 0 21 22" className="ml-[18px]"><path d="M13 1l6 6-6 5M19 7H8a6 6 0 0 0-6 6c0 4 3 6 5 8" fill="none" stroke="#8ea6cb" strokeWidth="1.800" /></svg>
        </div>
        <div className="text-[17px] text-white">TestHtml - Designer</div>
      </div>
      <div className="flex h-[48px] items-start pl-[6px] pt-[6px] text-[18px] text-[#444]">
        <div className="flex h-[42px] w-[87px] items-center justify-center bg-[#2b579a] text-white">File</div>
        <div className="ml-[20px] flex h-[42px] w-[54px] flex-col items-center border-b-[4px] border-[#2b72c4] font-semibold text-[#333]"><span className="leading-[44px]">Home</span></div>
        <div className="ml-[41px] leading-[44px]">Insert</div>
        <div className="ml-[41px] leading-[44px]">Report</div>
        <div className="ml-[41px] leading-[44px]">Page</div>
        <div className="ml-[41px] leading-[44px]">Layout</div>
        <div className="ml-[41px] leading-[44px]">Preview</div>
      </div>
      <Ribbon />
      <div className="h-[2px] bg-[#d4d4d4]" />
      <div className="flex h-[888px] items-start">
        <LeftBar />
        <Properties />
        <div className="ml-[12px] flex min-w-0 flex-1 flex-col pt-[5px]">
          <HRuler />
          <div className="mt-[27px] flex">
            <VRuler />
            <Canvas />
          </div>
        </div>
      </div>
      <div className="absolute left-[66px] top-[756px] h-[315px] w-[591px] border-[3px] border-[#ff0000]" />
      <div className="absolute left-[1818px] top-[548px] h-[43px] w-[195px] border-[3px] border-[#ff0000]" />
    </div>
  );
}
